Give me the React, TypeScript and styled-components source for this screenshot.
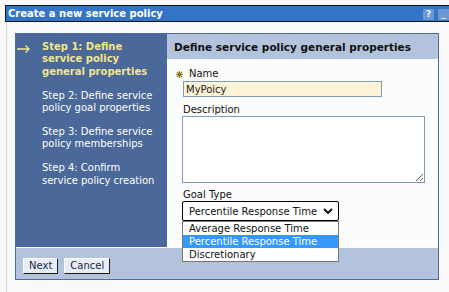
import styled, { createGlobalStyle } from "styled-components";

const GlobalStyle = createGlobalStyle`
  html, body {
    margin: 0;
    background: #fafafa;
    overflow: hidden;
  }
  body {
    font-family: "DejaVu Sans", Verdana, sans-serif;
    font-size: 10px;
  }
`;

const Page = styled.div`
  width: 450px;
  padding: 5px 0 0 5px;
`;

const TitleBar = styled.div`
  box-sizing: border-box;
  height: 17px;
  display: flex;
  align-items: center;
  justify-content: space-between;
  padding: 0 5px 0 2px;
  background: #3274c5;
  border: 1px solid #0b1420;
  color: #fff;
  font-weight: bold;
  font-size: 10px;
`;

const TitleIcons = styled.div`
  display: flex;
  gap: 4px;
  margin-top: 1px;
`;

const TitleIcon = styled.span`
  width: 11px;
  height: 11px;
  display: flex;
  align-items: center;
  justify-content: center;
  background: #6a98d4;
  color: #eef4ff;
  font-size: 9px;
  font-weight: bold;
  line-height: 1;
`;

const Body = styled.div`
  box-sizing: border-box;
  margin-left: 1px;
  border-left: 1px solid #d6d6d6;
  padding: 11px 0 0 8px;
  height: 270px;
`;

const Wizard = styled.div`
  box-sizing: border-box;
  width: 424px;
  border: 1px solid #4c6ca2;
  background: #b3c3dc;
`;

const TopRow = styled.div`
  display: flex;
  height: 213px;
`;

const StepNav = styled.ul`
  list-style: none;
  margin: 0;
  width: 150px;
  padding: 7px 0 0 1px;
  background: #4a6899;
  display: flex;
  flex-direction: column;
  gap: 11.5px;
`;

const Step = styled.li<{ $active?: boolean }>`
  display: flex;
  line-height: 12.4px;
  color: ${(p) => (p.$active ? "#f1e58c" : "#ffffff")};
  font-weight: ${(p) => (p.$active ? "bold" : "normal")};
`;

const StepMarker = styled.span`
  width: 25px;
  flex: none;
  padding-top: 3px;
`;

const StepText = styled.span`
  width: 115px;
`;

const Main = styled.div`
  flex: 1;
  display: flex;
  flex-direction: column;
`;

const MainHeader = styled.h2`
  margin: 0;
  height: 25px;
  display: flex;
  align-items: center;
  padding-left: 7px;
  background: #b3c3dc;
  color: #111;
  font-size: 10.5px;
  font-weight: bold;
`;

const Content = styled.div`
  flex: 1;
  background: #fcfcfc;
  padding: 9px 0 0 16px;
`;

const Label = styled.div<{ $gap?: number }>`
  display: flex;
  align-items: center;
  gap: 6px;
  line-height: 12px;
  color: #111;
  margin-top: ${(p) => p.$gap ?? 0}px;
`;

const RequiredLabel = styled(Label)`
  margin-left: -7px;
`;

const NameInput = styled.input`
  box-sizing: border-box;
  display: block;
  width: 199px;
  height: 16px;
  margin: 1px 0 0;
  padding: 0 2px;
  border: 1px solid #7f9db9;
  background: #fdf3d6;
  color: #222;
  font-family: "DejaVu Sans", Verdana, sans-serif;
  font-size: 10px;
  outline: none;
`;

const DescriptionInput = styled.textarea`
  box-sizing: border-box;
  display: block;
  width: 243px;
  height: 67px;
  margin: 0 0 0 -1px;
  padding: 2px;
  border: 1px solid #7f9db9;
  background: #fff;
  resize: both;
  outline: none;
`;

const SelectWrap = styled.div`
  position: relative;
  width: 157px;
  margin-left: -1px;
`;

const SelectBox = styled.div`
  box-sizing: border-box;
  height: 20px;
  display: flex;
  align-items: center;
  justify-content: space-between;
  padding: 0 5px 0 6px;
  border: 1px solid #000;
  border-radius: 2px;
  background: #fff;
  color: #111;
`;

const OptionList = styled.ul`
  position: absolute;
  top: 100%;
  left: 0;
  right: 0;
  margin: 0;
  padding: 0;
  list-style: none;
  border: 1px solid #767676;
  background: #fff;
  z-index: 2;
`;

const Option = styled.li<{ $selected?: boolean }>`
  height: 13px;
  line-height: 13px;
  padding-left: 6px;
  background: ${(p) => (p.$selected ? "#3399ff" : "#fff")};
  color: ${(p) => (p.$selected ? "#fff" : "#111")};
`;

const Footer = styled.div`
  display: flex;
  gap: 6px;
  border-top: 1px solid #fff;
  padding: 10px 7px 5px;
  background: #b3c3dc;
`;

const Button = styled.button`
  height: 16px;
  padding: 0 5px;
  border: 1px solid;
  border-color: #fff #202020 #202020 #fff;
  background: #e7edf7;
  color: #1b2640;
  font-family: "DejaVu Sans", Verdana, sans-serif;
  font-size: 10px;
  line-height: 1;
`;

const ArrowIcon = () => (
  <svg width="13" height="8" viewBox="0 0 13 8">
    <path d="M0 4h12M8.5 0.5L12 4 8.5 7.5" fill="none" stroke="#f1e58c" strokeWidth="1.3" />
  </svg>
);

const RequiredIcon = () => (
  <svg width="7" height="7" viewBox="0 0 7 7">
    <path d="M3.5 0v7M0 3.5h7M1 1l5 5M6 1L1 6" stroke="#8a7a14" strokeWidth="1.1" />
  </svg>
);

const Chevron = () => (
  <svg width="10" height="6" viewBox="0 0 10 6">
    <path d="M1 1l4 4 4-4" fill="none" stroke="#111" strokeWidth="2" />
  </svg>
);

const steps = [
  "Step 1: Define service policy general properties",
  "Step 2: Define service policy goal properties",
  "Step 3: Define service policy memberships",
  "Step 4: Confirm service policy creation",
];

const goalTypes = ["Average Response Time", "Percentile Response Time", "Discretionary"];

export default function App() {
  return (
    <Page>
      <GlobalStyle />
      <TitleBar>
        <span>Create a new service policy</span>
        <TitleIcons>
          <TitleIcon>?</TitleIcon>
          <TitleIcon>_</TitleIcon>
        </TitleIcons>
      </TitleBar>
      <Body>
        <Wizard>
          <TopRow>
            <StepNav>
              {steps.map((s, i) => (
                <Step key={s} $active={i === 0}>
                  <StepMarker>{i === 0 && <ArrowIcon />}</StepMarker>
                  <StepText>{s}</StepText>
                </Step>
              ))}
            </StepNav>
            <Main>
              <MainHeader>Define service policy general properties</MainHeader>
              <Content>
                <RequiredLabel>
                  <RequiredIcon />
                  Name
                </RequiredLabel>
                <NameInput defaultValue="MyPoicy" />
                <Label $gap={7}>Description</Label>
                <DescriptionInput />
                <Label $gap={6}>Goal Type</Label>
                <SelectWrap>
                  <SelectBox>
                    <span>Percentile Response Time</span>
                    <Chevron />
                  </SelectBox>
                  <OptionList>
                    {goalTypes.map((g) => (
                      <Option key={g} $selected={g === "Percentile Response Time"}>
                        {g}
                      </Option>
                    ))}
                  </OptionList>
                </SelectWrap>
              </Content>
            </Main>
          </TopRow>
          <Footer>
            <Button>Next</Button>
            <Button>Cancel</Button>
          </Footer>
        </Wizard>
      </Body>
    </Page>
  );
}
